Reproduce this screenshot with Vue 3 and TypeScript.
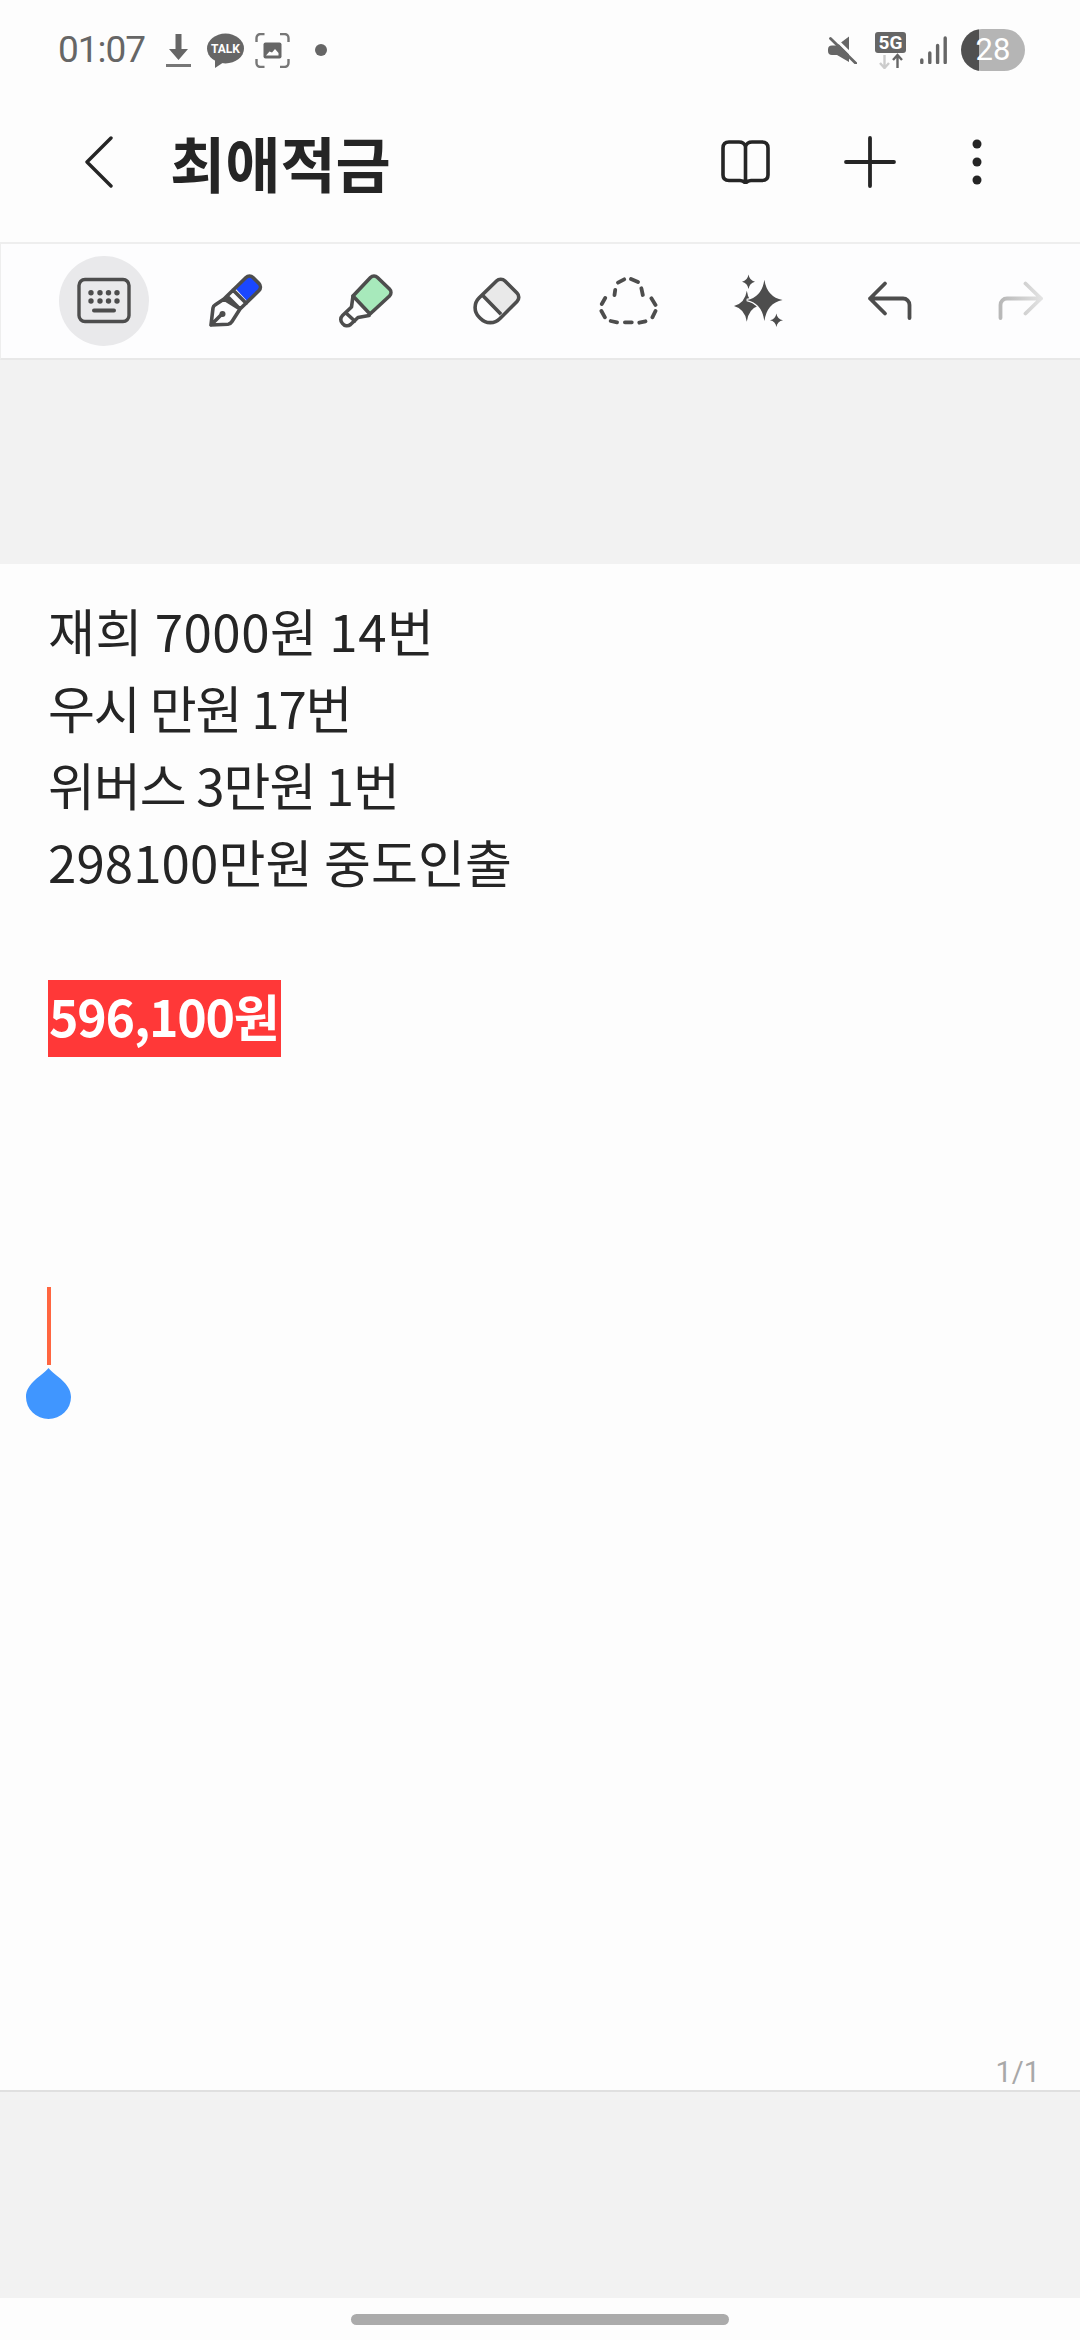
<script setup lang="ts">
interface NoteLine {
  text: string
  spacing: number
}

// the note's font runs a little wider or narrower per line than Noto does
const lines: NoteLine[] = [
  { text: '재희 7000원 14번', spacing: 0.5 },
  { text: '우시 만원 17번', spacing: -1.2 },
  { text: '위버스 3만원 1번', spacing: -1 },
  { text: '298100만원 중도인출', spacing: 0.1 },
  { text: '\u00a0', spacing: 0 },
]
</script>

<template>
  <div class="page">
    <div class="status">
      <div class="status-left">
        <span class="time">01:07</span>
        <svg class="s-download" width="25" height="35" viewBox="0 0 25 35">
          <path d="M9.500 1h6v15H22L12.500 27 3 16h6.500z" fill="#666" />
          <rect x="0" y="31" width="25" height="3" fill="#777" />
        </svg>
        <svg class="s-talk" width="37" height="35" viewBox="0 0 37 35">
          <ellipse cx="18.500" cy="15.500" rx="18.500" ry="15" fill="#666" />
          <path d="M8 26l0 9 9-6z" fill="#666" />
          <text x="18.500" y="20" text-anchor="middle" class="talk-text">TALK</text>
        </svg>
        <svg class="s-shot" width="35" height="35" viewBox="0 0 35 35">
          <path d="M1.500 9V5a4 4 0 0 1 4-4h4M25 1h4.500a4 4 0 0 1 4 4v4M33.500 26v4a4 4 0 0 1-4 4H25M9.500 34h-4a4 4 0 0 1-4-4v-4" fill="none" stroke="#777" stroke-width="2.400" />
          <rect x="8.500" y="9.500" width="18" height="16" rx="2" fill="#666" />
          <path d="M11 22.500l3.500-4 2.500 1 3-3.500 3.500 4v2.500z" fill="#fdfdfd" />
        </svg>
        <svg class="s-dot" width="12" height="12" viewBox="0 0 12 12"><circle cx="6" cy="6" r="6" fill="#666" /></svg>
      </div>
      <div class="status-right">
        <svg class="s-mute" width="29" height="28" viewBox="0 0 29 28">
          <path d="M0 13.500q0-4 4-4h5L21 .500V26L9 19H4q-4 0-4-4z" fill="#666" />
          <path d="M5.500 1L31 26" stroke="#fdfdfd" stroke-width="3" />
          <path d="M2.500 2.500L28 27.500" stroke="#666" stroke-width="2.800" stroke-linecap="round" />
        </svg>
        <svg class="s-5g" width="31" height="37" viewBox="0 0 31 37">
          <rect width="31" height="21" rx="3" fill="#666" />
          <text x="15.500" y="17" text-anchor="middle" class="net-text">5G</text>
          <path d="M9.500 23v13M5 31l4.500 5 4.500-5" fill="none" stroke="#ccc" stroke-width="2.400" />
          <path d="M22.500 36V23M18 28l4.500-5 4.500 5" fill="none" stroke="#666" stroke-width="2.400" />
        </svg>
        <svg class="s-signal" width="27" height="28" viewBox="0 0 27 28">
          <path d="M1.800 24v2.500M9.800 17v9.500M17.600 9.500v17M25.200 2v24.500" stroke="#666" stroke-width="3.400" stroke-linecap="round" fill="none" />
        </svg>
        <div class="battery"><span class="battery-num">28</span></div>
      </div>
    </div>

    <div class="appbar">
      <svg class="back" width="28" height="52" viewBox="0 0 28 52">
        <path d="M26 2L2 26l24 24" fill="none" stroke="#252525" stroke-width="3.400" stroke-linecap="round" stroke-linejoin="round" />
      </svg>
      <span class="title">최애적금</span>
      <div class="appbar-actions">
        <svg class="a-book" width="49" height="44" viewBox="0 0 49 44">
          <path d="M24.500 6.500Q23 2 18 2H8Q2 2 2 8v27q0 5.500 6 5.500h11q3 0 5.500 2.500 2.500-2.500 5.500-2.500h11q6 0 6-5.500V8q0-6-6-6H31q-5 0-6.500 4.500zv36" fill="none" stroke="#252525" stroke-width="3.600" stroke-linejoin="round" />
        </svg>
        <svg class="a-plus" width="52" height="52" viewBox="0 0 52 52">
          <path d="M26 2v48M2 26h48" stroke="#252525" stroke-width="3.800" stroke-linecap="round" />
        </svg>
        <svg class="a-more" width="10" height="46" viewBox="0 0 10 46">
          <circle cx="5" cy="5" r="4.500" fill="#252525" />
          <circle cx="5" cy="23" r="4.500" fill="#252525" />
          <circle cx="5" cy="41" r="4.500" fill="#252525" />
        </svg>
      </div>
    </div>

    <div class="toolbar">
      <div class="tool tool-active">
        <svg width="60" height="60" viewBox="0 0 60 60">
          <rect x="5" y="8.500" width="50" height="42" rx="6" fill="none" stroke="#4d4d4d" stroke-width="3.400" />
          <g fill="#4d4d4d">
            <circle cx="17" cy="21.700" r="2.700" /><circle cx="26" cy="21.700" r="2.700" /><circle cx="34.500" cy="21.700" r="2.700" /><circle cx="43" cy="21.700" r="2.700" />
            <circle cx="17" cy="30" r="2.700" /><circle cx="26" cy="30" r="2.700" /><circle cx="34.500" cy="30" r="2.700" /><circle cx="43" cy="30" r="2.700" />
          </g>
          <path d="M20 39.500h20" stroke="#4d4d4d" stroke-width="4" stroke-linecap="round" />
        </svg>
      </div>
      <div class="tool">
        <svg width="60" height="60" viewBox="0 0 60 60">
          <path d="M30.500 17.500L41 7a5 5 0 0 1 7 0l6 6a5 5 0 0 1 0 7L43 31z" fill="#1a47ff" />
          <path d="M22 25L41 6.500a5 5 0 0 1 7 0l6 6a5 5 0 0 1 0 7L35 38l-8 12.500q-1.500 2.500-4 2.700L6 54l2-17q.3-2 2-3l9-6zM19 28l16 10M28 19l13.200 13.200M22 25l13 13M6 54l11-11" fill="none" stroke="#4d4d4d" stroke-width="3.600" stroke-linecap="round" stroke-linejoin="round" />
          <circle cx="17.500" cy="43" r="3" fill="#4d4d4d" />
        </svg>
      </div>
      <div class="tool">
        <svg width="60" height="60" viewBox="0 0 60 60">
          <path d="M17 25L34.500 6.500a5 5 0 0 1 7 0L53.500 18a5 5 0 0 1 0 7L34 43z" fill="#a7e9bb" stroke="#4d4d4d" stroke-width="3.600" stroke-linejoin="round" />
          <path d="M17 25l-1.500 11-9 8.500a5.500 5.500 0 0 0 0 8 5.500 5.500 0 0 0 8 1L22 46.500 33 44.500M10 42l8.700 8" fill="none" stroke="#4d4d4d" stroke-width="3.600" stroke-linecap="round" stroke-linejoin="round" />
        </svg>
      </div>
      <div class="tool">
        <svg width="60" height="60" viewBox="0 0 60 60">
          <path d="M17 24.700L29.500 10a6 6 0 0 1 8.500 0L50 22a6 6 0 0 1 0 8.500L34 42.300z" fill="#e9e9e9" />
          <path d="M29.500 10a6 6 0 0 1 8.500 0L50 22a6 6 0 0 1 0 8.500L33 47.500a13.500 13.500 0 0 1-19.500 0L12 46a13.500 13.500 0 0 1 0-19zM16 24.700l18 18.500" fill="none" stroke="#4d4d4d" stroke-width="3.600" stroke-linejoin="round" />
        </svg>
      </div>
      <div class="tool">
        <svg width="60" height="60" viewBox="0 0 60 60">
          <path d="M20 11.700L26.200 8.300M33 8L40 11M43.400 17.300L44.800 24M53.400 27.300L57.500 34M57.500 40L54.400 46.300M47.500 50.300L41.300 51.700M33.800 51.300H26.900M19 51.300L12.700 50M6.900 46.300L3.400 40M3.800 33L7.200 27M16.500 24L17.200 19" fill="none" stroke="#4d4d4d" stroke-width="3.800" stroke-linecap="round" />
        </svg>
      </div>
      <div class="tool">
        <svg width="60" height="60" viewBox="0 0 60 60">
          <g fill="#4d4d4d">
            <path d="M17.800 19.700Q19.500 32 29 35 19.500 38 17.800 50.700 16 38 5 35 16 32 17.800 19.700z" />
            <path d="M35.400 8.700Q38 26 53.600 29 38 32 35.400 50 32.800 32 17.800 29 32.800 26 35.400 8.700z" stroke="#fdfdfe" stroke-width="2.400" paint-order="stroke" />
            <path d="M19.500 3.500Q20.500 9.500 26 10.700 20.500 11.900 19.500 18 18.500 11.900 13 10.700 18.500 9.500 19.500 3.500z" />
            <path d="M47.400 42.500Q48.300 48.200 54 49.300 48.300 50.400 47.400 56 46.500 50.400 41 49.300 46.500 48.200 47.400 42.500z" />
          </g>
        </svg>
      </div>
      <div class="tool">
        <svg width="60" height="60" viewBox="0 0 60 60">
          <path d="M25 12.500L10 27.500l15 15M10 27.500h33a6.500 6.500 0 0 1 6.500 6.500v13" fill="none" stroke="#4d4d4d" stroke-width="3.800" stroke-linecap="round" stroke-linejoin="round" />
        </svg>
      </div>
      <div class="tool">
        <svg width="60" height="60" viewBox="0 0 60 60">
          <defs>
            <linearGradient id="redoFade" x1="0" y1="0" x2="1" y2="0">
              <stop offset="0" stop-color="#b8b8b8" />
              <stop offset="1" stop-color="#e2e2e2" />
            </linearGradient>
          </defs>
          <path d="M34.500 12.500l15.500 15-15.500 15M50 27.500H16a6.500 6.500 0 0 0-6.500 6.500v13" fill="none" stroke="url(#redoFade)" stroke-width="3.800" stroke-linecap="round" stroke-linejoin="round" />
        </svg>
      </div>
    </div>

    <div class="band-top"></div>

    <div class="note">
      <div class="note-text">
        <div
          v-for="(line, i) in lines"
          :key="i"
          class="note-line"
          :style="{ letterSpacing: line.spacing + 'px' }"
        >{{ line.text }}</div>
        <div class="note-line"><span class="mark">596,100원</span></div>
      </div>
      <div class="caret">
        <div class="caret-bar"></div>
        <svg width="45" height="51" viewBox="0 0 45 51">
          <path d="M22.500 0C29 8 45 15 45 29A22.500 22 0 0 1 0 29C0 15 16 8 22.500 0z" fill="#4096ff" />
        </svg>
      </div>
      <div class="page-num">1/1</div>
    </div>

    <div class="band-bottom"></div>

    <div class="navbar"><div class="pill"></div></div>
  </div>
</template>

<style scoped>
.page {
  width: 1080px;
  height: 2340px;
  display: flex;
  flex-direction: column;
  background: #fdfdfd;
  font-family: "Noto Sans CJK KR", "Noto Sans", sans-serif;
  overflow: hidden;
}

.status {
  height: 100px;
  display: flex;
  align-items: center;
  justify-content: space-between;
  padding: 0 55px 0 58px;
}
.status-left,
.status-right {
  display: flex;
  align-items: center;
}
.time {
  font-family: Roboto, sans-serif;
  font-size: 37px;
  line-height: 40px;
  letter-spacing: -1px;
  color: #666;
  width: 108px;
}
.s-talk { margin-left: 16px; }
.s-shot { margin-left: 11px; }
.s-dot { margin-left: 25px; }
.talk-text {
  font-family: Roboto, sans-serif;
  font-weight: 700;
  font-size: 12px;
  fill: #fff;
}
.net-text {
  font-family: Roboto, sans-serif;
  font-weight: 700;
  font-size: 19px;
  fill: #fff;
}
.s-5g { margin-left: 18px; }
.s-signal { margin-left: 14px; }
.battery {
  margin-left: 14px;
  width: 64px;
  height: 42px;
  border-radius: 21px;
  background: linear-gradient(to right, #505050 18px, #b5b5b5 18px);
  display: flex;
  align-items: center;
  justify-content: center;
}
.battery-num {
  font-family: Roboto, sans-serif;
  font-size: 31px;
  color: #fff;
  line-height: 42px;
}

.appbar {
  height: 142px;
  display: flex;
  align-items: center;
  padding: 0 98px 18px 85px;
  box-sizing: border-box;
}
.title {
  margin-left: 57px;
  font-size: 60px;
  font-weight: 700;
  color: #252525;
  line-height: 64px;
  white-space: nowrap;
}
.appbar-actions {
  margin-left: auto;
  display: flex;
  align-items: center;
}
.a-plus { margin-left: 74px; }
.a-more { margin-left: 76px; }

.toolbar {
  height: 118px;
  box-sizing: border-box;
  display: flex;
  align-items: center;
  padding-left: 37px;
  background: #fdfdfe;
  border-top: 2px solid #eeeeee;
  border-bottom: 2px solid #e8e8e8;
  border-left: 1px solid #eeeeee;
}
.tool {
  flex: 0 0 131px;
  display: flex;
  align-items: center;
  justify-content: center;
}
.tool svg {
  position: relative;
  z-index: 1;
}
.tool-active {
  position: relative;
}
.tool-active::before {
  content: "";
  position: absolute;
  left: 21px;
  top: -15px;
  width: 90px;
  height: 90px;
  border-radius: 50%;
  background: #e9e9eb;
}

.band-top {
  height: 204px;
  background: #f2f2f2;
}

.note {
  flex: 1;
  display: flex;
  flex-direction: column;
  padding: 31px 40px 0 46px;
  border-bottom: 2px solid #e0e0e0;
}
.note-line {
  height: 77px;
  line-height: 70px;
  font-size: 51px;
  color: #252525;
  padding-left: 2px;
  white-space: nowrap;
}
.mark {
  display: inline-block;
  height: 77px;
  width: 233px;
  padding: 0 0 0 1px;
  box-sizing: border-box;
  background: #ff3838;
  color: #fff;
  font-size: 50px;
  font-weight: 700;
  letter-spacing: -1.2px;
  vertical-align: top;
}
.caret {
  margin: 230px 0 0 -20px;
  width: 45px;
  display: flex;
  flex-direction: column;
  align-items: center;
  gap: 3px;
}
.caret-bar {
  width: 4px;
  height: 78px;
  background: #ff6640;
}
.page-num {
  margin-top: auto;
  align-self: flex-end;
  font-family: Roboto, sans-serif;
  font-size: 29px;
  line-height: 36px;
  color: #a8a8a8;
}

.band-bottom {
  height: 206px;
  background: #f2f2f2;
}

.navbar {
  height: 42px;
  display: flex;
  justify-content: center;
  padding-top: 16px;
  box-sizing: border-box;
}
.pill {
  width: 378px;
  height: 11px;
  border-radius: 6px;
  background: #ababab;
}
</style>

<style>
html,
body {
  margin: 0;
  background: #fdfdfd;
}
</style>
